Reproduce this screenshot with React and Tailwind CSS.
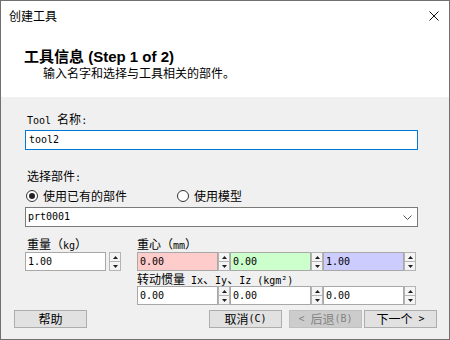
import React from 'react';

const CJK = /([\u2e80-\u303f\u3400-\u9fff\uff00-\uffef]+)/;

// SimSun 式排版：汉字 12px，拉丁字符半宽等宽
function T({ children }) {
  const parts = String(children).split(CJK).filter(Boolean);
  return parts.map((p, i) =>
    CJK.test(p) ? (
      <span key={i} className="text-[12px] font-['Noto_Sans_CJK_SC',sans-serif]">{p}</span>
    ) : (
      <span key={i} className="text-[10px] font-['DejaVu_Sans_Mono','Noto_Sans_CJK_SC',monospace] whitespace-pre">{p}</span>
    )
  );
}

function Spin() {
  return (
    <div className="w-[12px] h-full flex flex-col border border-[#b4b4b4] bg-[#f4f4f4]">
      <div className="flex-1 flex items-center justify-center border-b border-[#b4b4b4]">
        <svg width="5" height="3" viewBox="0 0 5 3"><polygon points="2.5,0 5,3 0,3" fill="#202020" /></svg>
      </div>
      <div className="flex-1 flex items-center justify-center">
        <svg width="5" height="3" viewBox="0 0 5 3"><polygon points="0,0 5,0 2.5,3" fill="#202020" /></svg>
      </div>
    </div>
  );
}

function Spinner({ value, bg, gap }) {
  return (
    <div className={`flex h-[19px] ${gap}`}>
      <div className={`w-[81px] h-full border border-[#a8a8a8] ${bg} pl-[2px] flex items-center leading-[14px]`}>
        <T>{value}</T>
      </div>
      <Spin />
    </div>
  );
}

function Radio({ checked, label }) {
  return (
    <div className="flex items-center gap-[5px]">
      <div className="w-[12px] h-[12px] rounded-full border border-[#333] bg-white flex items-center justify-center">
        {checked && <div className="w-[6px] h-[6px] rounded-full bg-[#222]" />}
      </div>
      <T>{label}</T>
    </div>
  );
}

function Btn({ label, disabled }) {
  return (
    <div
      className={`w-[73px] h-[18px] flex items-center justify-center leading-[14px] border ${
        disabled ? 'bg-[#cccccc] border-[#bfbfbf] text-[#838383]' : 'bg-[#e1e1e1] border-[#adadad] text-black'
      }`}
    >
      <T>{label}</T>
    </div>
  );
}

export default function App() {
  return (
    <div className="w-[450px] h-[340px] flex flex-col border border-[#707070] bg-[#f0f0f0] text-black overflow-hidden">
      {/* 标题栏 */}
      <div className="h-[30px] bg-white flex items-center justify-between pl-[8px] pr-[10px] font-['Noto_Sans_CJK_SC',sans-serif] text-[12px]">
        <span>创建工具</span>
        <svg width="10" height="10" viewBox="0 0 10 10">
          <path d="M0.5 0.5 L9.5 9.5 M9.5 0.5 L0.5 9.5" stroke="#111" strokeWidth="1" />
        </svg>
      </div>

      {/* 头部说明 */}
      <div className="h-[66px] bg-white pt-[17px]">
        <div className="pl-[23px] leading-[18px] text-[15px] font-bold font-['Liberation_Sans','Noto_Sans_CJK_SC',sans-serif]">
          工具信息 (Step 1 of 2)
        </div>
        <div className="pl-[42px] leading-[14px] text-[12px] font-['Noto_Sans_CJK_SC',sans-serif]">
          输入名字和选择与工具相关的部件。
        </div>
      </div>

      {/* 表单 */}
      <div className="flex-1 flex flex-col pl-[24px] pr-[31px]">
        <div className="mt-[14px] pl-[2px] leading-[14px]"><T>Tool 名称:</T></div>
        <div className="mt-[2px] h-[20px] border border-[#0078d7] bg-white pl-[3px] flex items-center leading-[14px]">
          <T>tool2</T>
        </div>

        <div className="mt-[18px] pl-[2px] leading-[14px]"><T>选择部件:</T></div>
        <div className="mt-[4px] h-[14px] flex items-center leading-[14px] pl-[1px]">
          <div className="w-[151px]"><Radio checked label="使用已有的部件" /></div>
          <Radio label="使用模型" />
        </div>
        <div className="mt-[4px] h-[20px] border border-[#7a7a7a] bg-white pl-[2px] pr-[5px] flex items-center justify-between leading-[14px]">
          <T>prt0001</T>
          <svg width="9" height="5" viewBox="0 0 9 5">
            <polyline points="0.5,0.5 4.5,4.5 8.5,0.5" fill="none" stroke="#555" strokeWidth="1" />
          </svg>
        </div>

        <div className="mt-[9px] flex">
          <div className="w-[112px] flex flex-col">
            <div className="h-[14px] pl-[2px] leading-[14px]"><T>重量（kg）</T></div>
            <div className="mt-[2px]"><Spinner value="1.00" bg="bg-white" gap="gap-[3px]" /></div>
          </div>
          <div className="flex flex-col">
            <div className="h-[14px] leading-[14px]"><T>重心（mm）</T></div>
            <div className="mt-[2px] flex">
              <Spinner value="0.00" bg="bg-[#ffcccc]" gap="gap-0" />
              <Spinner value="0.00" bg="bg-[#ccffcc]" gap="gap-0" />
              <Spinner value="1.00" bg="bg-[#ccccff]" gap="gap-0" />
            </div>
            <div className="h-[15px] leading-[15px]"><T>转动惯量 Ix、Iy、Iz (kgm²)</T></div>
            <div className="flex">
              <Spinner value="0.00" bg="bg-white" gap="gap-0" />
              <Spinner value="0.00" bg="bg-white" gap="gap-0" />
              <Spinner value="0.00" bg="bg-white" gap="gap-0" />
            </div>
          </div>
        </div>
      </div>

      {/* 按钮 */}
      <div className="h-[29px] flex items-start pl-[13px] pr-[12px]">
        <div className="flex-1"><Btn label="帮助" /></div>
        <div className="flex">
          <Btn label="取消(C)" />
          <div className="ml-[7px]"><Btn label="< 后退(B)" disabled /></div>
          <div className="ml-[2px]"><Btn label="下一个 >" /></div>
        </div>
      </div>
    </div>
  );
}
